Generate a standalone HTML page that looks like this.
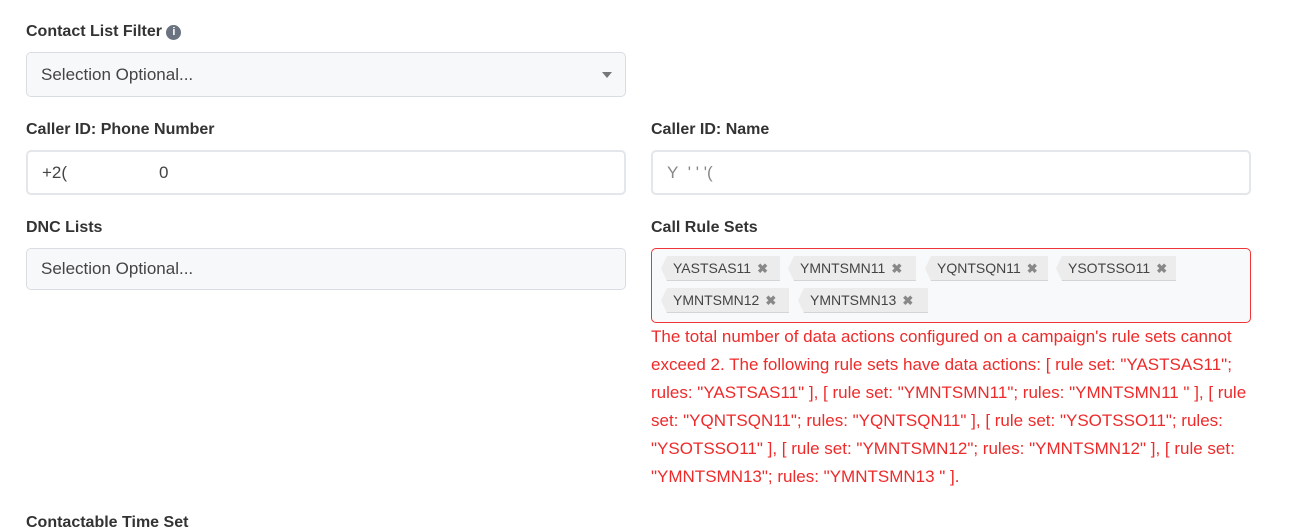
<!DOCTYPE html>
<html><head><style>
body{margin:0;width:1307px;height:525px;background:#fff;font-family:"Liberation Sans",sans-serif;position:relative;overflow:hidden;color:#333}
.l{position:absolute;font-weight:bold;font-size:16px;color:#333}
.in{position:absolute;box-sizing:border-box;border:1px solid #d9dde3;border-radius:5px;background:#f7f8fa;font-size:17px;color:#444;padding-left:14px;display:flex;align-items:center}
.w{background:#fff;border:2px solid #e3e6ea}
.tag{position:absolute;height:25px;background:#ececec;font-size:14px;color:#444;line-height:25px;padding-left:12px;box-sizing:border-box;clip-path:polygon(6px 0,100% 0,100% 100%,6px 100%,0 50%);border-bottom:1px solid #d5d5d5}
.tag b{color:#888;font-size:13px;margin-left:6px}
.err{position:absolute;left:651px;top:323px;width:605px;color:#ee2a2a;font-size:17px;line-height:28px}
</style></head><body>
<div class="l" style="left:26px;top:23px">Contact List Filter <span style="display:inline-block;width:15px;height:15px;border-radius:50%;background:#6b7380;color:#fff;font-size:11px;text-align:center;line-height:15px;vertical-align:1px">i</span></div>
<div class="in" style="left:26px;top:52px;width:600px;height:45px">Selection Optional...<span style="position:absolute;right:13px;top:19px;border:5px solid transparent;border-top:6px solid #777"></span></div>
<div class="l" style="left:26px;top:121px">Caller ID: Phone Number</div>
<div class="in w" style="left:26px;top:150px;width:600px;height:45px">+2(<span style="margin-left:92px">0</span></div>
<div class="l" style="left:651px;top:121px">Caller ID: Name</div>
<div class="in w" style="left:651px;top:150px;width:600px;height:45px;color:#888">Y&nbsp;&nbsp;' ' '(</div>
<div class="l" style="left:26px;top:219px">DNC Lists</div>
<div class="in" style="left:26px;top:248px;width:600px;height:42px">Selection Optional...</div>
<div class="l" style="left:651px;top:219px">Call Rule Sets</div>
<div class="in" style="left:651px;top:248px;width:600px;height:75px;border-color:#ef3535;background:#f8f9fa"></div>
<div class="tag" style="left:661px;top:256px;width:119px">YASTSAS11<b>✖</b></div>
<div class="tag" style="left:788px;top:256px;width:128px">YMNTSMN11<b>✖</b></div>
<div class="tag" style="left:925px;top:256px;width:123px">YQNTSQN11<b>✖</b></div>
<div class="tag" style="left:1056px;top:256px;width:120px">YSOTSSO11<b>✖</b></div>
<div class="tag" style="left:661px;top:288px;width:128px">YMNTSMN12<b>✖</b></div>
<div class="tag" style="left:798px;top:288px;width:130px">YMNTSMN13<b>✖</b></div>
<div class="err">The total number of data actions configured on a campaign's rule sets cannot exceed 2. The following rule sets have data actions: [ rule set: "YASTSAS11"; rules: "YASTSAS11" ], [ rule set: "YMNTSMN11"; rules: "YMNTSMN11 " ], [ rule set: "YQNTSQN11"; rules: "YQNTSQN11" ], [ rule set: "YSOTSSO11"; rules: "YSOTSSO11" ], [ rule set: "YMNTSMN12"; rules: "YMNTSMN12" ], [ rule set: "YMNTSMN13"; rules: "YMNTSMN13 " ].</div>
<div class="l" style="left:26px;top:514px">Contactable Time Set</div>
</body></html>
